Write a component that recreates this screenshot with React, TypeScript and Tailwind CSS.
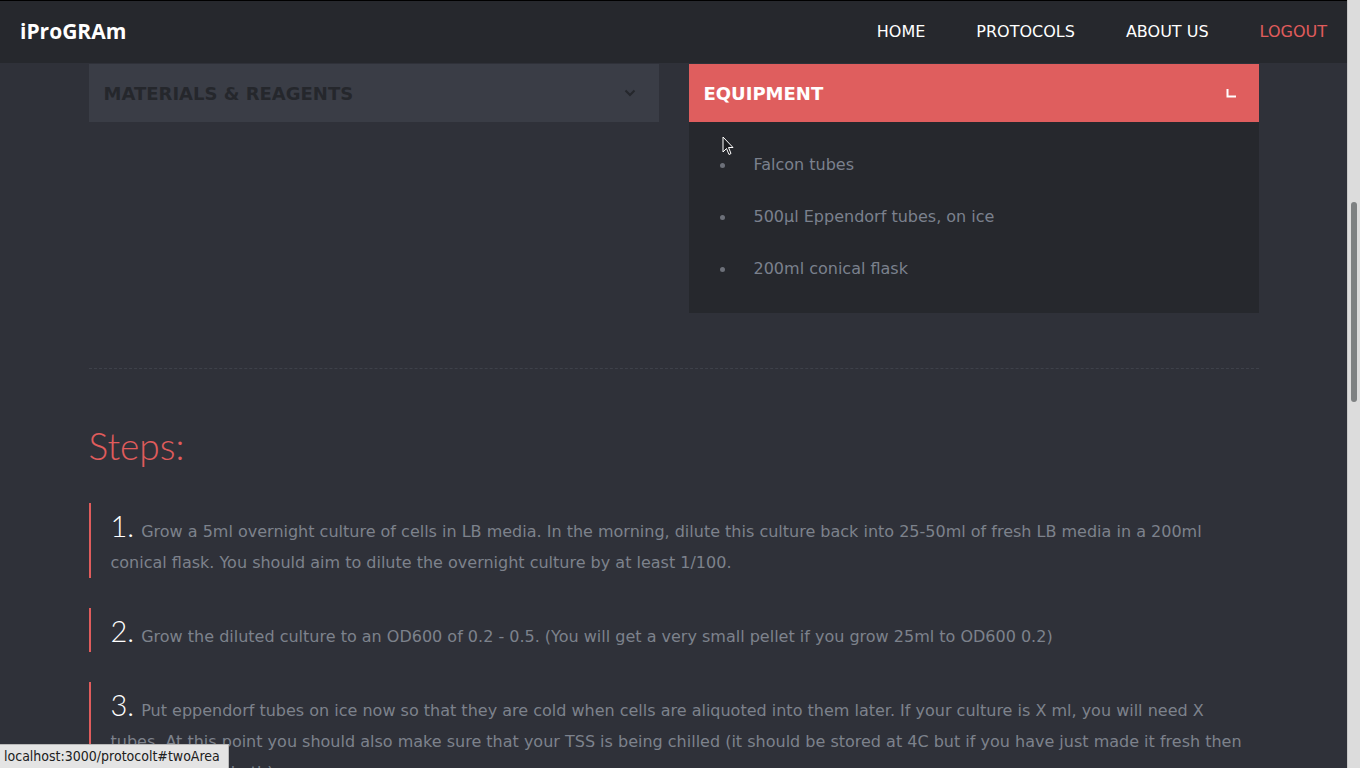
import React from 'react'

const EQUIPMENT = ['Falcon tubes', '500µl Eppendorf tubes, on ice', '200ml conical flask']

const STEPS = [
  'Grow a 5ml overnight culture of cells in LB media. In the morning, dilute this culture back into 25-50ml of fresh LB media in a 200ml conical flask. You should aim to dilute the overnight culture by at least 1/100.',
  'Grow the diluted culture to an OD600 of 0.2 - 0.5. (You will get a very small pellet if you grow 25ml to OD600 0.2)',
  'Put eppendorf tubes on ice now so that they are cold when cells are aliquoted into them later. If your culture is X ml, you will need X tubes. At this point you should also make sure that your TSS is being chilled (it should be stored at 4C but if you have just made it fresh then put it in an ice bath).',
  'Collect the cells by centrifugation at 4C and resuspend them gently in ice cold TSS.',
]

const NAV = [
  { label: 'HOME', color: 'text-white' },
  { label: 'PROTOCOLS', color: 'text-white' },
  { label: 'ABOUT US', color: 'text-white' },
  { label: 'LOGOUT', color: 'text-[#e05c5c]' },
]

export default function App() {
  return (
    <div className="relative flex h-[768px] w-full overflow-hidden bg-[#2f3139] font-['DejaVu_Sans',sans-serif]">
      <div className="h-full min-w-0 flex-1 overflow-hidden">
        {/* Navbar */}
        <nav className="flex h-[63px] items-center justify-between border-t border-black bg-[#26282d] px-5">
          <div className="font-['Open_Sans',sans-serif] text-[21px] font-bold text-white">iProGRAm</div>
          <div className="flex gap-[51px] text-[16px]">
            {NAV.map(n => (
              <a key={n.label} className={n.color}>{n.label}</a>
            ))}
          </div>
        </nav>

        <main className="mx-auto w-[1170px]">
          {/* Materials / equipment panels */}
          <div className="grid grid-cols-2 items-start gap-[30px] pt-px">
            <div className="flex h-[58px] items-center justify-between bg-[#3a3d46] pl-[15px] pr-[23px]">
              <span className="text-[18px] font-bold text-[#25272c]">MATERIALS &amp; REAGENTS</span>
              <svg width="12" height="8" viewBox="0 0 12 8" fill="none">
                <path d="M1.5 1.5 L6 6 L10.5 1.5" stroke="#25272c" strokeWidth="2" />
              </svg>
            </div>

            <div>
              <div className="flex h-[58px] items-center justify-between bg-[#df5e5e] pl-[15px] pr-[23px]">
                <span className="text-[18px] font-bold text-white">EQUIPMENT</span>
                <svg width="10" height="9" viewBox="0 0 10 9" fill="none">
                  <path d="M1.5 0 L1.5 7.5 L10 7.5" stroke="#fff" strokeWidth="2" />
                </svg>
              </div>
              <ul className="bg-[#26282d] pb-[18px] pt-[17px]">
                {EQUIPMENT.map(e => (
                  <li key={e} className="flex h-[52px] items-center text-[16px] text-[#7b818d]">
                    <span className="ml-[31px] mr-[29px] h-[5px] w-[5px] rounded-full bg-[#6c7079]" />
                    {e}
                  </li>
                ))}
              </ul>
            </div>
          </div>

          <div className="mt-[55px] border-t border-dashed border-[#3e414a]" />

          {/* Steps */}
          <h2 className="mb-[36px] mt-[56px] font-['Lato',sans-serif] text-[37px] font-light leading-[42px] text-[#e05c5c]">Steps:</h2>
          <ol>
            {STEPS.map((s, i) => (
              <li key={i} className="mb-[30px] border-l-2 border-[#e05c5c] pl-5 pr-[15px] pt-[13px] text-[16px] leading-[31px] text-[#7d828c]">
                <span className="mr-[2px] font-['Lato',sans-serif] text-[29px] font-light leading-[0] text-white">{i + 1}.</span> {s}
              </li>
            ))}
          </ol>
        </main>
      </div>

      {/* Scrollbar */}
      <div className="flex h-full w-[13px] justify-center border-l border-[#c9c9c9] bg-[#dcdcdc] pt-[202px]">
        <div className="h-[200px] w-[6px] rounded-full bg-[#7e8182]" />
      </div>

      {/* Status bar */}
      <div className="absolute bottom-0 left-0 flex h-[24px] w-[229px] items-center border-r border-t border-[#b9b9b9] bg-[#e4e4e4] pl-[4px] font-['DejaVu_Sans_Condensed','Liberation_Sans_Narrow',sans-serif] text-[14px] text-[#202020]">
        localhost:3000/protocolt#twoArea
      </div>

      {/* Mouse pointer */}
      <svg className="absolute left-[722px] top-[136px]" width="13" height="21" viewBox="0 0 13 21">
        <path d="M1 1 L1 16 L4.5 12.5 L7 18.5 L9 17.5 L6.5 11.5 L11 11.5 Z" fill="#1b1c1f" stroke="#fff" strokeWidth="1" />
      </svg>
    </div>
  )
}
